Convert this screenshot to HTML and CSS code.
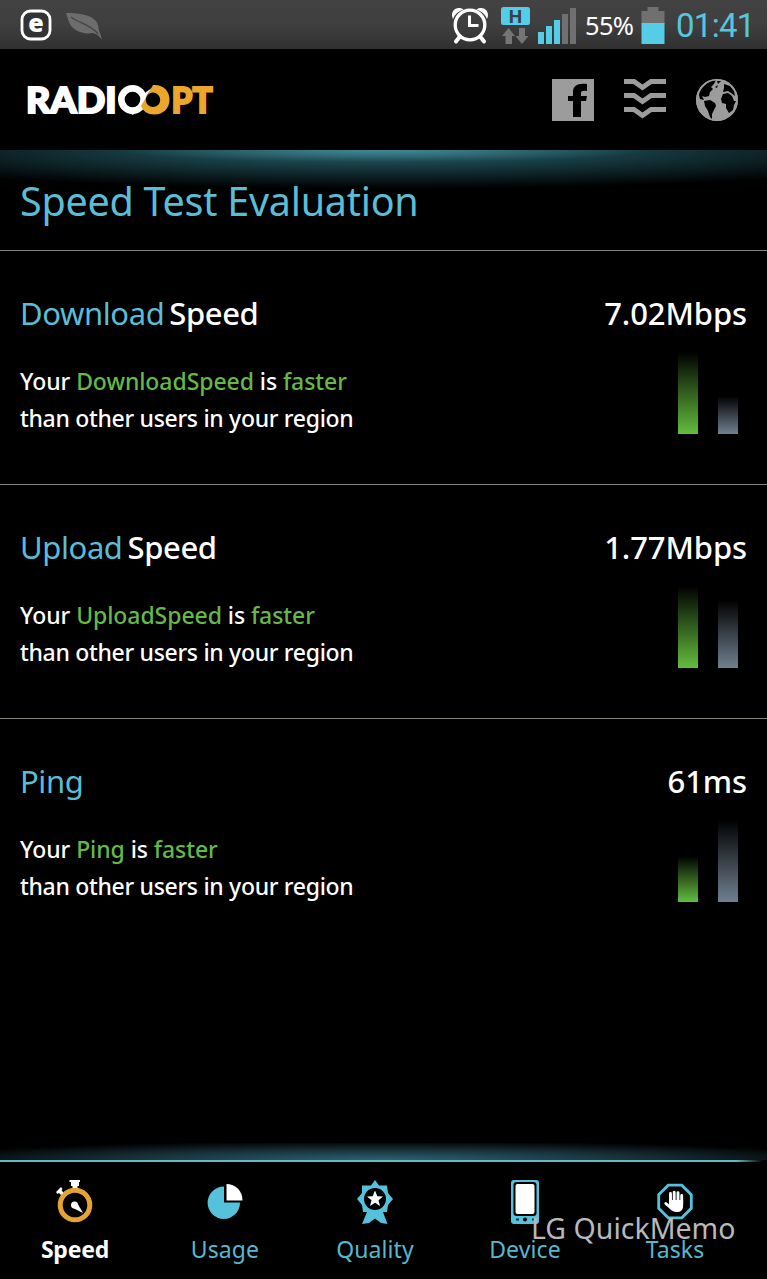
FILE: index.html
```html
<!DOCTYPE html>
<html lang="en">
<head>
<meta charset="utf-8">
<title>Speed Test Evaluation</title>
<link rel="stylesheet" href="styles.css">
</head>
<body>
<div class="screen">
  <div class="status">
    <svg class="status-left" width="110" height="49" viewBox="0 0 110 49">
      <rect x="22" y="11" width="28" height="28" rx="8.500" fill="#333" stroke="#fff" stroke-width="2.800"/>
      <text class="e-glyph" x="36" y="32" text-anchor="middle">e</text>
      <path d="M66 13C77 13 90 14 96 21C99 25 98 29 100 33L102 39.500C99 36 97 34 93 33C82 35 72 30 69 22Z" fill="#6d6d6d"/>
      <path d="M71 17C80 24 90 24 98 34" fill="none" stroke="#444" stroke-width="1.300"/>
    </svg>
    <div class="status-right">
      <svg width="130" height="49" viewBox="450 0 130 49">
        <g fill="none" stroke="#fff">
          <circle cx="470" cy="25" r="14.800" stroke-width="3.300"/>
          <path d="M469.500 15.500V25.500H478.500" stroke-width="3"/>
          <path d="M459.500 37L456 41.500M480.500 37L484 41.500" stroke-width="4" stroke-linecap="round"/>
        </g>
        <path d="M453 19C449.500 12 456 5 463.500 9.500C458.500 11 455 14 453 19ZM487 19C490.500 12 484 5 476.500 9.500C481.500 11 485 14 487 19Z" fill="#fff"/>
        <rect x="501" y="7" width="29" height="18" rx="2.500" fill="#55cde6"/>
        <text class="h-glyph" x="515.500" y="22.700" text-anchor="middle">H</text>
        <path d="M508.500 28L515 36H512V44H505.500V36H502ZM522 44L528.500 36H525V28H519V36H515.500Z" fill="#757575"/>
        <path d="M538 32h6v12h-6zM546 26h6v18h-6zM554 20h6v24h-6z" fill="#55cde6"/>
        <path d="M562 14h6v30h-6zM570 8h6v36h-6z" fill="#707070"/>
      </svg>
      <span class="percent">55%</span>
      <svg width="24" height="49" viewBox="0 0 24 49">
        <path d="M0.500 11H6.500V7H17.500V11H23.500V24H0.500Z" fill="#707070"/>
        <rect x="0.500" y="23" width="23" height="21" fill="#55cde6"/>
      </svg>
      <span class="clock">01:41</span>
    </div>
  </div>

  <header class="brand">
    <svg width="190" height="48" viewBox="25 76 190 48">
      <text class="logo-text logo-white" x="26" y="113.200" textLength="90.500" lengthAdjust="spacingAndGlyphs">RADI</text>
      <circle cx="132.500" cy="99.500" r="14.500" fill="#fff"/>
      <path d="M133 115L152 88L146 92L128 112Z" fill="#fff"/>
      <circle cx="132.500" cy="99.500" r="7.800" fill="#000"/>
      <path d="M153 85C163 84 169.500 91 169.500 99.800S163 114.500 154.500 114.500C147.500 114.500 143 111 141 106Z" fill="#eba62c"/>
      <circle cx="153" cy="99.800" r="7.200" fill="#000"/>
      <text class="logo-text logo-gold" x="171.500" y="113.200" textLength="41" lengthAdjust="spacingAndGlyphs">PT</text>
    </svg>
    <div class="links">
      <svg width="42" height="42" viewBox="0 0 42 42">
        <path d="M0 0H42V42H0Z" fill="#9c9c9c"/>
        <path d="M21 38V22H16V17H21V13C21 7 25 4 35 5V12C31 11.500 29 12 29 14V17H35L34 22H29V38Z" fill="#000"/>
      </svg>
      <svg width="42" height="42" viewBox="0 0 42 42">
        <path d="M0 2.500H10L18.500 8.500L27 2.500H42M0 16.500H10L18.500 22.500L27 16.500H42M0 30.500H10L18.500 36.500L27 30.500H42" fill="none" stroke="#9c9c9c" stroke-width="5"/>
      </svg>
      <svg width="42" height="42" viewBox="0 0 42 42">
        <circle cx="21" cy="21" r="21" fill="#9c9c9c"/>
        <path d="M3 16C4 10 9 5 15 2L20 1L18 5L15 8L17 10L14 13L13 17L9 18L6 17L8 21L4 20ZM8 22L14 21L19 24L20 27L18 31L16 35L16 41L14 38L12 32L9 27ZM27 15L32 14L36 17L38 22L40 22L38 26L37 31L33 34L30 29L30 25L26 24L25 20ZM28 5L34 7L38 12L39 17L35 14L32 12L27 13L28 9ZM21 2L25 2L22 5ZM19 8L22 6L21 9Z" fill="#000"/>
        <circle cx="21" cy="21" r="20.200" fill="none" stroke="#9c9c9c" stroke-width="1.600"/>
      </svg>
    </div>
  </header>

  <div class="title"><h1>Speed Test Evaluation</h1></div>

  <main>
    <section class="metric">
      <div class="row"><h2><span class="blue">Download</span><span>Speed</span></h2><span class="value">7.02Mbps</span></div>
      <div class="row detail">
        <p><span class="lead">Your <span class="green">DownloadSpeed</span> is <span class="green">faster</span></span><br>than other users in your region</p>
        <div class="bars"><i class="bar mine" style="height:82px"></i><i class="bar others" style="height:38px"></i></div>
      </div>
    </section>
    <section class="metric">
      <div class="row"><h2><span class="blue">Upload</span><span>Speed</span></h2><span class="value">1.77Mbps</span></div>
      <div class="row detail">
        <p><span class="lead">Your <span class="green">UploadSpeed</span> is <span class="green">faster</span></span><br>than other users in your region</p>
        <div class="bars"><i class="bar mine" style="height:82px"></i><i class="bar others" style="height:68px"></i></div>
      </div>
    </section>
    <section class="metric">
      <div class="row"><h2><span class="blue">Ping</span></h2><span class="value">61ms</span></div>
      <div class="row detail">
        <p><span class="lead">Your <span class="green">Ping</span> is <span class="green">faster</span></span><br>than other users in your region</p>
        <div class="bars"><i class="bar mine" style="height:46px"></i><i class="bar others" style="height:82px"></i></div>
      </div>
    </section>
  </main>

  <nav class="tabs">
    <a class="tab active">
      <svg width="44" height="48" viewBox="0 0 44 48">
        <circle cx="22" cy="25" r="14.800" fill="none" stroke="#e4a431" stroke-width="5"/>
        <path d="M16.500 0H27V2H26V6H24.500V8H19.500V6H18V2H16.500ZM3 12L8 7L9.500 9L8.500 10L10.500 13L8 15L6 13L4.500 14Z" fill="#fff"/>
        <circle cx="21.500" cy="25" r="3.500" fill="#fff"/><path d="M24.500 23.500L30 33L20 28Z" fill="#fff"/>
      </svg>
      <span>Speed</span>
    </a>
    <a class="tab">
      <svg width="44" height="48" viewBox="0 0 44 48">
        <path d="M21 6.500A16.200 16.200 0 1 0 37 22.500H21Z" fill="#55c1db"/>
        <path d="M23.500 4A16 16 0 0 1 39.500 20.500H23.500Z" fill="#fff"/>
      </svg>
      <span>Usage</span>
    </a>
    <a class="tab">
      <svg width="44" height="48" viewBox="0 0 44 48">
        <path d="M22 0L26 5.500L34 5.500L35 13L40 19L35 25L34 32H30L34.500 44L28 43L22 38.500L16 43L9 44L14 32H10L9 25L4 19L9 13L9 5.500L18 5.500Z" fill="#55c1db"/>
        <circle cx="22" cy="19" r="11" fill="#000"/>
        <path d="M22 10.500L24.300 16.200L30 16.500L25.500 20.200L27 26L22 22.800L17 26L18.500 20.200L14 16.500L19.700 16.200Z" fill="#fff"/>
      </svg>
      <span>Quality</span>
    </a>
    <a class="tab">
      <svg width="44" height="48" viewBox="0 0 44 48">
        <rect x="8" y="0" width="28" height="44" rx="3" fill="#55c1db"/>
        <rect x="10.500" y="2" width="23" height="34" rx="3" fill="#000"/>
        <rect x="12.500" y="4" width="19" height="30" rx="2" fill="#fff"/>
        <circle cx="22" cy="39.500" r="2" fill="#000"/><path d="M13 39.500h3M29 39.500h3" stroke="#063b46" stroke-width="2"/>
      </svg>
      <span>Device</span>
    </a>
    <a class="tab">
      <svg width="44" height="48" viewBox="0 0 44 48">
        <path d="M15.200 5.200H28.800L38.300 14.700V28.300L28.800 37.800H15.200L5.700 28.300V14.700Z" fill="none" stroke="#55c1db" stroke-width="2.800"/>
        <g fill="none" stroke="#fff" stroke-width="2.900" stroke-linecap="round"><path d="M17.500 22V13.500M21.200 22V12.300M25 22V12.800M28.700 24V15.500M12.800 23.500L18 28"/></g>
        <path d="M16 20H30.100V26C30.100 30 27.500 32 24 32C19 32 17.500 29.500 16 27Z" fill="#fff"/>
      </svg>
      <span>Tasks</span>
    </a>
  </nav>
  <div class="watermark">LG QuickMemo</div>
</div>
</body>
</html>
```
FILE: styles.css
```css
* { box-sizing: border-box; }
body { margin: 0; background: #000; color: #fff; font-family: "Noto Sans", sans-serif; }
.screen { position: relative; width: 767px; height: 1279px; display: flex; flex-direction: column; overflow: hidden; }
svg { display: block; flex: none; }
.status { height: 49px; flex: none; display: flex; justify-content: space-between; background: linear-gradient(#424242, #3f3f3f 50%, #303030); }
.e-glyph { font: 900 25px "Open Sans", sans-serif; fill: #fff; }
.h-glyph { font: 700 19px Roboto, sans-serif; fill: #354249; }
.status-right { display: flex; align-items: center; padding-right: 14px; }
.percent { width: 56px; margin-left: 5px; font-size: 25.5px; letter-spacing: -.7px; }
.clock { width: 77px; margin-left: 11px; padding-top: 3px; font: 33px/46px Roboto, sans-serif; letter-spacing: -.7px; color: #55c6de; }
.brand { height: 101px; flex: none; display: flex; align-items: center; justify-content: space-between; padding: 0 29px 0 25px; }
.logo-text { font: 900 36px Lato, sans-serif; stroke-width: 2px; }
.logo-white { fill: #fff; stroke: #fff; }
.logo-gold { fill: #eba62c; stroke: #eba62c; }
.links { display: flex; gap: 30px; }
.title { height: 101px; flex: none; padding: 24px 20px 0; border-bottom: 1px solid #858580; background: radial-gradient(ellipse 270px 12px at 50% 0, rgba(85,180,195,.5), transparent), radial-gradient(ellipse 590px 39px at 50% 0, #2b626d, #173d44 40%, transparent); }
h1, h2, p { margin: 0; font-weight: 400; }
h1 { font-size: 39.5px; line-height: 54px; letter-spacing: -.25px; color: #5bbdd5; }
main { flex: 1; }
.metric { height: 234px; padding: 41px 20px 0; border-bottom: 1px solid #858580; }
.metric:last-child { border: 0; }
.row { display: flex; justify-content: space-between; }
h2, .value { font-size: 31px; line-height: 42px; font-weight: 500; }
.value { letter-spacing: -.1px; }
h2 { display: flex; gap: 5px; letter-spacing: -.4px; }
.blue { color: #5bbdd5; font-weight: 400; }
.detail { padding-top: 17px; }
p { padding-top: 12px; font-size: 23px; line-height: 37px; font-weight: 500; letter-spacing: -.31px; }
.lead { letter-spacing: -.07px; }
.green { color: #65b946; }
.bars { height: 83px; display: flex; align-items: flex-end; gap: 20px; padding-right: 9px; }
.bar { width: 20px; }
.mine { background: linear-gradient(transparent, #63bd3d); }
.others { background: linear-gradient(transparent, #708090); }
.tabs { height: 136px; flex: none; display: flex; padding: 37px 17px 0 0; background: linear-gradient(90deg, #67b8c3 96%, transparent 99.500%) 0 17px / 100% 2px no-repeat, radial-gradient(ellipse 480px 19px at 50% 100%, #2b6274, rgba(35,75,85,.7) 50%, transparent) 0 0 / 100% 17px no-repeat; }
.tab { width: 150px; display: flex; flex-direction: column; align-items: center; color: #55b8cf; font-size: 23px; line-height: 30px; letter-spacing: .1px; }
.tab span { padding-top: 6px; }
.active { color: #fff; font-weight: 700; font-size: 23px; letter-spacing: -.2px; }
.watermark { position: absolute; left: 531px; top: 1208px; font-size: 28.5px; line-height: 40px; color: #b9b9b9; white-space: nowrap; }
```
